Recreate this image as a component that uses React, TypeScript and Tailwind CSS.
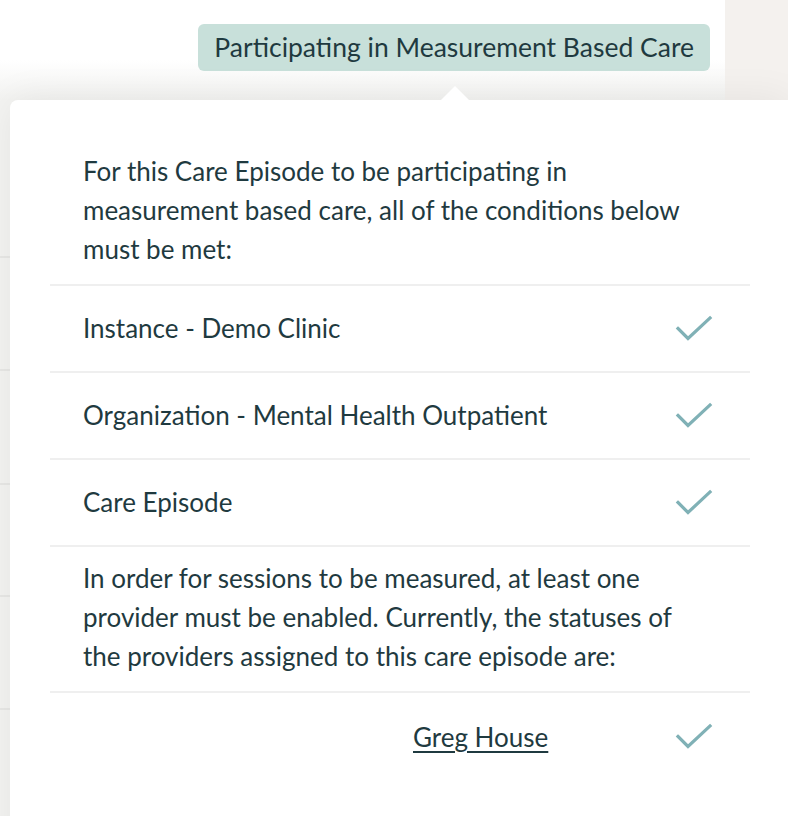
import React from 'react';

const Check: React.FC = () => (
  <svg width="38" height="28" viewBox="0 0 38 28" fill="none" className="shrink-0">
    <path d="M3 13.5L13 23.5L35 3" stroke="#80b1b6" strokeWidth="3.2" strokeLinecap="square" />
  </svg>
);

const conditions = [
  'Instance - Demo Clinic',
  'Organization - Mental Health Outpatient',
  'Care Episode',
];

export default function App() {
  return (
    <div
      className="relative w-[788px] h-[816px] overflow-hidden bg-[#f4f1ee] text-[#1f3a40]"
      style={{ fontFamily: 'Lato, "Noto Sans", sans-serif' }}
    >
      {/* Card behind the popover */}
      <div className="w-[725px] h-full bg-white rounded-tr-[24px] flex flex-col">
        <div className="h-[100px] flex justify-end items-start pt-[24px] pr-[15px] bg-gradient-to-b from-white from-60% to-[#f3f3f1]">
          <span className="h-[47px] px-[16px] flex items-center rounded-md bg-[#c8e0da] text-[26.5px]">
            Participating in Measurement Based Care
          </span>
        </div>
        <div className="flex-1 bg-[#f4f4f2]">
          <div className="h-[158px] border-b-2 border-[#e8e8e6]" />
          <div className="h-[113px] border-b-2 border-[#e8e8e6]" />
          <div className="h-[114px] border-b-2 border-[#e8e8e6]" />
          <div className="h-[112px] border-b-2 border-[#e8e8e6]" />
          <div className="h-[113px] border-b-2 border-[#e8e8e6]" />
        </div>
      </div>

      {/* Popover */}
      <div className="absolute left-[10px] top-[100px] w-[780px] h-[760px] bg-white rounded-tl-lg shadow-[0_0_40px_rgba(0,0,0,0.07)] px-[40px]">
        <div className="absolute left-[431px] -top-[14px] w-0 h-0 border-l-[14px] border-r-[14px] border-b-[14px] border-l-transparent border-r-transparent border-b-white" />
        <p className="pl-[33px] pr-[55px] pt-[52px] pb-[15px] text-[26px] leading-[39px] border-b-2 border-[#efefef]">
          For this Care Episode to be participating in measurement based care, all of the conditions below must be met:
        </p>
        {conditions.map((c) => (
          <div key={c} className="h-[87px] pl-[33px] pr-[37px] flex items-center justify-between border-b-2 border-[#efefef]">
            <span className="text-[26px]">{c}</span>
            <Check />
          </div>
        ))}
        <p className="pl-[33px] pr-[55px] pt-[12px] pb-[15px] text-[26px] leading-[39px] border-b-2 border-[#efefef]">
          In order for sessions to be measured, at least one provider must be enabled. Currently, the statuses of the providers assigned to this care episode are:
        </p>
        <div className="h-[88px] pr-[37px] flex items-center">
          <div className="flex-1 pl-[363px]">
            <a href="#" className="text-[26px] underline underline-offset-[4px] decoration-[1.5px]">
              Greg House
            </a>
          </div>
          <Check />
        </div>
      </div>
    </div>
  );
}
